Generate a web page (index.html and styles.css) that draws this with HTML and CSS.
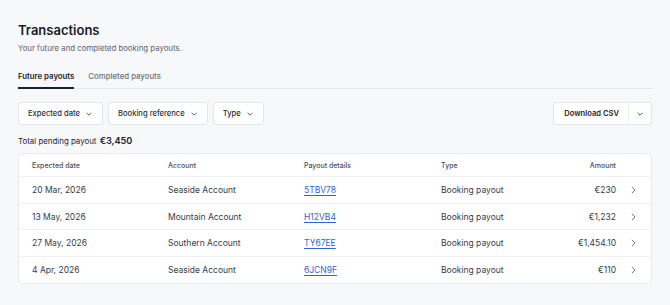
FILE: index.html
```html
<!DOCTYPE html>
<html>
<head>
<meta charset="utf-8">
<link rel="stylesheet" href="styles.css">
</head>
<body>
<main class="page">
  <h1 class="title">Transactions</h1>
  <p class="subtitle">Your future and completed booking payouts.</p>
  <nav class="tabs">
    <span class="tab active">Future payouts</span>
    <span class="tab">Completed payouts</span>
  </nav>
  <div class="toolbar">
    <div class="filters">
      <button class="btn">Expected date <svg class="chev" viewBox="0 0 10 6"><path d="M1 1l4 4 4-4"/></svg></button>
      <button class="btn">Booking reference <svg class="chev" viewBox="0 0 10 6"><path d="M1 1l4 4 4-4"/></svg></button>
      <button class="btn">Type <svg class="chev" viewBox="0 0 10 6"><path d="M1 1l4 4 4-4"/></svg></button>
    </div>
    <div class="split">
      <button class="split-main">Download CSV</button>
      <button class="split-toggle"><svg class="chev" viewBox="0 0 10 6"><path d="M1 1l4 4 4-4"/></svg></button>
    </div>
  </div>
  <p class="total">Total pending payout <strong>€3,450</strong></p>
  <div class="card">
    <div class="row head">
      <span>Expected date</span><span>Account</span><span>Payout details</span><span>Type</span><span class="amt">Amount</span><span></span>
    </div>
    <div class="row">
      <span>20 Mar, 2026</span><span>Seaside Account</span><a class="ref">5TBV78</a><span>Booking payout</span><span class="amt">€230</span><svg class="next" viewBox="0 0 6 10"><path d="M1 1l4 4-4 4"/></svg>
    </div>
    <div class="row">
      <span>13 May, 2026</span><span>Mountain Account</span><a class="ref">H12VB4</a><span>Booking payout</span><span class="amt">€1,232</span><svg class="next" viewBox="0 0 6 10"><path d="M1 1l4 4-4 4"/></svg>
    </div>
    <div class="row">
      <span>27 May, 2026</span><span>Southern Account</span><a class="ref">TY67EE</a><span>Booking payout</span><span class="amt">€1,454.10</span><svg class="next" viewBox="0 0 6 10"><path d="M1 1l4 4-4 4"/></svg>
    </div>
    <div class="row">
      <span>4 Apr, 2026</span><span>Seaside Account</span><a class="ref">6JCN9F</a><span>Booking payout</span><span class="amt">€110</span><svg class="next" viewBox="0 0 6 10"><path d="M1 1l4 4-4 4"/></svg>
    </div>
  </div>
</main>
</body>
</html>
```
FILE: styles.css
```css
* { box-sizing: border-box; }
html, body { margin: 0; padding: 0; }
body {
  background: #f7f8fa;
  font-family: Inter, "Noto Sans", sans-serif;
  color: #2a2e39;
}
.page { padding: 19px 18px 0 18px; }
.title {
  margin: 0;
  font-size: 13px;
  line-height: 22px;
  font-weight: 600;
  color: #171b26;
}
.subtitle {
  margin: 1px 0 0;
  font-size: 7.8px;
  line-height: 12px;
  color: #5c6270;
}
.tabs {
  display: flex;
  gap: 14px;
  margin-top: 16px;
  border-bottom: 1px solid #e6e8ec;
}
.tab {
  font-size: 7.8px;
  line-height: 12px;
  padding-bottom: 5px;
  color: #6b7080;
  font-weight: 500;
}
.tab.active {
  color: #1b1f2a;
  font-weight: 600;
  border-bottom: 2px solid #1b1f2a;
  margin-bottom: -1px;
}
.toolbar {
  display: flex;
  justify-content: space-between;
  margin-top: 13px;
}
.filters { display: flex; gap: 5px; }
.btn, .split-main, .split-toggle {
  font-family: inherit;
  background: #fff;
  border: 1px solid #e3e5ea;
  height: 23px;
  font-size: 7.6px;
  color: #2a2e39;
  display: flex;
  align-items: center;
  gap: 6px;
  padding: 0 10px 0 9px;
  border-radius: 3px;
  font-weight: 500;
}
.chev {
  width: 6px;
  height: 4px;
  fill: none;
  stroke: #3a3f4b;
  stroke-width: 1.4;
}
.split { display: flex; }
.split-main {
  border-radius: 3px 0 0 3px;
  font-weight: 600;
  padding: 0 9px 0 10px;
  color: #1f2330;
}
.split-toggle {
  border-left: 1px solid #eceef1;
  border-radius: 0 3px 3px 0;
  padding: 0 8px;
  margin-left: -1px;
}
.total {
  margin: 10px 0 0;
  font-size: 7.9px;
  line-height: 12px;
  color: #1f2330;
}
.total strong { font-size: 9.2px; font-weight: 600; margin-left: 1px; }
.card {
  margin-top: 6px;
  background: #fff;
  border: 1px solid #e8eaee;
  border-radius: 5px;
}
.row {
  display: grid;
  grid-template-columns: 136px 136px 137px 1fr 90px 35px;
  align-items: center;
  padding-left: 13px;
  height: 26.7px;
  font-size: 8.5px;
  color: #383c45;
  border-top: 1px solid #eef0f3;
}
.row.head {
  height: 22px;
  border-top: none;
  font-size: 7px;
  color: #4a4f5a;
  font-weight: 500;
}
.amt { text-align: right; }
.ref {
  color: #2f64d6;
  text-decoration: underline;
  text-underline-offset: 2px;
  justify-self: start;
}
.next {
  justify-self: center;
  width: 5px;
  height: 8px;
  fill: none;
  stroke: #5a5f6a;
  stroke-width: 1.1;
}
```
